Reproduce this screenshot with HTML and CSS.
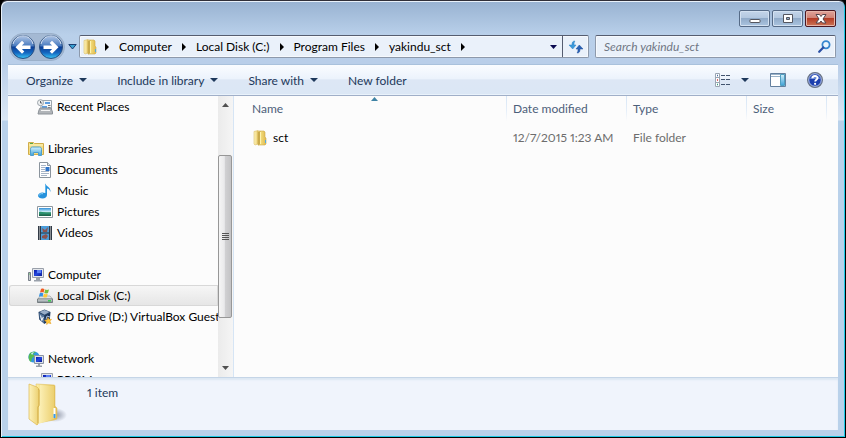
FILE: index.html
```html
<!DOCTYPE html>
<html lang="en">
<head>
<meta charset="utf-8">
<title>yakindu_sct</title>
<link rel="stylesheet" href="styles.css">
</head>
<body>
<svg class="defs" aria-hidden="true">
  <defs>
    <linearGradient id="gold" x1="0" x2="1"><stop offset="0" stop-color="#fff0a8"/><stop offset=".45" stop-color="#efd673"/><stop offset="1" stop-color="#e0b94f"/></linearGradient>
    <linearGradient id="goldLight" x1="0" x2="1"><stop offset="0" stop-color="#fdf3bd"/><stop offset="1" stop-color="#ecd070"/></linearGradient>
    <linearGradient id="orb" x1="0" y1="0" x2="0" y2="1"><stop offset="0" stop-color="#b4c8e6"/><stop offset=".45" stop-color="#4a7cc0"/><stop offset=".5" stop-color="#0b3f98"/><stop offset=".75" stop-color="#1467c0"/><stop offset="1" stop-color="#38c8f8"/></linearGradient>
    <linearGradient id="screen" x1="0" y1="0" x2="1" y2="1"><stop offset="0" stop-color="#0a1aa8"/><stop offset=".5" stop-color="#2448e0"/><stop offset="1" stop-color="#0a1890"/></linearGradient>
    <linearGradient id="sky" x1="0" y1="0" x2="0" y2="1"><stop offset="0" stop-color="#2f8fd8"/><stop offset=".5" stop-color="#d8f4fa"/><stop offset=".6" stop-color="#3b8f68"/><stop offset="1" stop-color="#15604a"/></linearGradient>
    <linearGradient id="aqua" x1="0" y1="0" x2="0" y2="1"><stop offset="0" stop-color="#d4f1fc"/><stop offset="1" stop-color="#3fa2d8"/></linearGradient>
    <linearGradient id="metal" x1="0" y1="0" x2="0" y2="1"><stop offset="0" stop-color="#e4e8ea"/><stop offset="1" stop-color="#7b868c"/></linearGradient>
    <symbol id="folder" viewBox="0 0 16 16">
      <path d="M2 1.500 6 .5V14l-3 1-1-1z" fill="url(#goldLight)" stroke="#dcc068" stroke-width=".6"/>
      <path d="M6 1h6l1 1v5l1 1v6l-1 1H6z" fill="url(#gold)" stroke="#cfa747" stroke-width=".6"/>
      <path d="M6 2 8.500 1v13L6 15.500z" fill="#c9aa4c"/>
      <path d="M8.500 2v12" stroke="#fff3b0"/>
      <path d="M13.500 10v3" stroke="#52abe0"/>
    </symbol>
    <symbol id="monitor" viewBox="0 0 16 16">
      <path d="M.5 5.500h2v8h-2z" fill="#c8ccd0" stroke="#777f88"/>
      <path d="M1 7h1" stroke="#5ec060"/>
      <path d="M4.500 1.500h11v9h-11z" fill="#e4e7ec" stroke="#9aa0aa"/>
      <path d="M6 3h8v6H6z" fill="url(#screen)"/>
      <path d="M9 3h4v3H9z" fill="#5c80f4"/>
      <path d="M8 11h4v2h2v1.500H6V13h2z" fill="#9aa1ab"/>
    </symbol>
  </defs>
</svg>
<div class="window">
  <header class="titlebar">
    <button class="caption" type="button" aria-label="Minimize"><svg width="12" height="12" viewBox="0 0 12 12"><rect x="1" y="6.500" width="10" height="3" rx=".5" fill="#fff" stroke="#54565f"/></svg></button>
    <button class="caption" type="button" aria-label="Maximize"><svg width="12" height="12" viewBox="0 0 12 12"><path d="M1.500 1.500h9v8h-9zM4.500 4.500v2h3v-2z" fill="#fff" fill-rule="evenodd" stroke="#54565f"/></svg></button>
    <button class="caption close" type="button" aria-label="Close"><svg width="12" height="12" viewBox="0 0 12 12"><path d="M1 1.500h3.500L6 3.500l1.500-2H11L8 6l3 4H7.500L6 8l-1.500 2H1l3-4z" fill="#fff" stroke="#54434a"/></svg></button>
  </header>

  <div class="navigation">
    <div class="travel">
      <button class="orb" type="button" aria-label="Back"><svg width="24" height="24" viewBox="0 0 24 24"><circle cx="12" cy="12" r="11.500" fill="url(#orb)" stroke="#2a4f80"/><path d="M2 9a10.200 10.200 0 0 1 20 0" fill="none" stroke="#d2def0"/><path d="M4.500 12.200 11 5.700l2.300 2.300-2.400 2.400H19.500v3.600h-8.600l2.400 2.400-2.300 2.300z" fill="#fff"/></svg></button>
      <button class="orb" type="button" aria-label="Forward"><svg width="24" height="24" viewBox="0 0 24 24"><circle cx="12" cy="12" r="11.500" fill="url(#orb)" stroke="#2a4f80"/><path d="M2 9a10.200 10.200 0 0 1 20 0" fill="none" stroke="#d2def0"/><path d="M19.500 12.200 13 5.700 10.700 8l2.400 2.400H4.500V14h8.600l-2.400 2.400 2.300 2.300z" fill="#fff"/></svg></button>
    </div>
    <button class="recent" type="button" aria-label="Recent pages"><svg width="9" height="6" viewBox="0 0 9 6"><path d="M.8.500h7.400L4.500 5z" fill="#38a0d0" stroke="#1d3f73"/></svg></button>
    <nav class="address" aria-label="Address">
      <svg class="folder-small" width="16" height="16"><use href="#folder"/></svg>
      <svg class="crumb-arrow" width="4" height="8"><path d="M0 0v8l4-4z"/></svg>
      <a href="#">Computer</a>
      <svg class="crumb-arrow" width="4" height="8"><path d="M0 0v8l4-4z"/></svg>
      <a href="#">Local Disk (C:)</a>
      <svg class="crumb-arrow" width="4" height="8"><path d="M0 0v8l4-4z"/></svg>
      <a href="#">Program Files</a>
      <svg class="crumb-arrow" width="4" height="8"><path d="M0 0v8l4-4z"/></svg>
      <a href="#">yakindu_sct</a>
      <svg class="crumb-arrow" width="4" height="8"><path d="M0 0v8l4-4z"/></svg>
      <button class="history" type="button" aria-label="Previous locations"><svg width="7" height="4"><path d="M0 0h7L3.500 4z" fill="#0a0a50"/></svg></button>
      <button class="refresh" type="button" aria-label="Refresh"><svg width="16" height="14" viewBox="0 0 16 14"><path d="M7 1C4.500 1 4 2.500 4 5H1l3.700 4L8 5H6c0-2 .2-3 1-4z" fill="#3a9adb" stroke="#2c7fc2" stroke-width=".5"/><path d="M9 13c2.500 0 3-1.500 3-4h3l-3.700-4L8 9h2c0 2-.2 3-1 4z" fill="#2a62b4" stroke="#1f4f9c" stroke-width=".5"/></svg></button>
    </nav>
    <label class="search">
      <input type="search" placeholder="Search yakindu_sct" aria-label="Search yakindu_sct">
      <svg width="13" height="13" viewBox="0 0 13 13"><circle cx="8" cy="4.800" r="3.600" fill="#eaf5fd" stroke="#3586cf" stroke-width="1.800"/><path d="M5.300 7.500 1.200 11.800" stroke="#2a4fa4" stroke-width="2.200" stroke-linecap="round"/></svg>
    </label>
  </div>

  <main class="client">
    <div class="toolbar">
      <button type="button">Organize<svg width="8" height="4"><path d="M0 0h8L4 4z"/></svg></button>
      <button type="button">Include in library<svg width="8" height="4"><path d="M0 0h8L4 4z"/></svg></button>
      <button type="button">Share with<svg width="8" height="4"><path d="M0 0h8L4 4z"/></svg></button>
      <button type="button">New folder</button>
      <div class="view-tools">
        <button class="views" type="button" aria-label="Change your view"><svg width="16" height="14" viewBox="0 0 16 14"><path d="M.5.500h4v13h-4zM.5 4.500h4M.5 9.500h4" fill="#fff" stroke="#9aa5b2"/><path d="M2 2.500h1" stroke="#426ca5" stroke-width="1.500"/><path d="M2 7h1" stroke="#d03030" stroke-width="1.500"/><path d="M2 11.500h1" stroke="#2f9a80" stroke-width="1.500"/><path d="M6 2.500h10M6 6.500h10M6 11.500h10" stroke="#41536e" stroke-dasharray="4 1"/></svg><svg width="8" height="4"><path d="M0 0h8L4 4z"/></svg></button>
        <button type="button" aria-label="Show the preview pane"><svg width="16" height="14" viewBox="0 0 16 14"><path d="M.5.500h15v13H.5z" fill="#fff" stroke="#64809f"/><path d="M1 1.500h14M1 3.500h9" stroke="#9ab3c9"/><path d="M10.500 1.500h4v11h-4z" fill="url(#aqua)" stroke="#4f9fc0"/></svg></button>
        <button type="button" aria-label="Get help"><svg width="16" height="16" viewBox="0 0 16 16"><circle cx="8" cy="8" r="7.400" fill="#1c3fae" stroke="#6b7585" stroke-width="1.200"/><circle cx="8" cy="8" r="6.300" fill="none" stroke="#dbe5f5" stroke-width=".8"/><path d="M3 7a5.200 5.200 0 0 1 10 0z" fill="#6585d4"/><path d="M5.500 6.300C5.500 3.200 10.500 3.300 10.500 6c0 1.800-2.300 1.800-2.300 3.500" fill="none" stroke="#fff" stroke-width="1.900"/><circle cx="8.100" cy="11.800" r="1.100" fill="#fff"/></svg></button>
      </div>
    </div>

    <div class="panes">
      <nav class="tree" aria-label="Folders">
        <ul>
          <li class="child last"><a href="#"><svg width="16" height="16" viewBox="0 0 16 16"><path d="M4 1.500h10.500v9H4z" fill="#f4f7f9" stroke="#9ba5ad"/><path d="M8 3h5v2H8zM5 7h5v3H5z" fill="#5b9ce0"/><path d="M11 6.500h2.500M11 8.500h2.500" stroke="#777"/><path d="m2 11 1-2h11l1.500 4v2H1z" fill="#b1b5b9" stroke="#8c9298"/><path d="M4 11.500h9" stroke="#f5f5f5"/><circle cx="3.500" cy="3.700" r="3" fill="#eef0f1" stroke="#9ca4aa"/><path d="M3.500 2v2h1.700" fill="none" stroke="#596069"/></svg>Recent Places</a></li>
          <li><a href="#"><svg width="16" height="16" viewBox="0 0 16 16"><path d="M.5 1.500h5l1 1h9v11H.5z" fill="#f4dd83" stroke="#d0ad4b"/><path d="M2 2.500h3" stroke="#58a845"/><path d="M1 4h14" stroke="#fff4bd"/><path d="M2.500 8.500c0-2 1-2.500 2-2.500h7c1 0 2 .5 2 2.500v6h-3v-3h-5v3h-3z" fill="url(#aqua)" stroke="#4d9dcc"/></svg>Libraries</a></li>
          <li class="child"><a href="#"><svg width="16" height="16" viewBox="0 0 16 16"><path d="M2.500.500h8l3 3v12h-11z" fill="#fff" stroke="#8b949d"/><path d="M10.500.500v3h3" fill="#dfe5ea" stroke="#8b949d"/><path d="M4 3.500h5M4 5.500h4M4 7.500h4M4 9.500h8M4 11.500h8M4 13.500h6" stroke="#a6b4c6"/><path d="M8.500 5h4v4h-4z" fill="#2e73c8"/></svg>Documents</a></li>
          <li class="child"><a href="#"><svg width="16" height="16" viewBox="0 0 16 16"><path d="M8 .300c.5 3 6 3.200 5.500 9-.5-2.600-2-3.500-3.500-3.800V12c0 2-2 3.500-4.500 3.500S1 14.200 1 12.700C1 11 3 9.500 5.500 9.500c1 0 1.800.2 2.500.6z" fill="#2692dc"/><path d="M2.200 12.500c.3-1.300 2-2.200 3.800-1.800" fill="none" stroke="#8ed5fb"/><path d="M8.500 2v8" stroke="#7bc8f3" stroke-width=".7"/></svg>Music</a></li>
          <li class="child"><a href="#"><svg width="16" height="16" viewBox="0 0 16 16"><path d="M.5 2.500h15v11H.5z" fill="#fff" stroke="#8e979e"/><path d="M2 4h12v8H2z" fill="url(#sky)"/><path d="M2 8c3-1 5 1 12 .5V10H2z" fill="#2a9170"/></svg>Pictures</a></li>
          <li class="child last"><a href="#"><svg width="16" height="16" viewBox="0 0 16 16"><path d="M1 1h14v14H1z" fill="#26303b"/><path d="M4 1h8v6.500H4zM4 8.500h8V15H4z" fill="#4b9dda"/><path d="m5 3 3 2 3-3-1 5H6zM5 11l4-2 2 2-2 3-4-1z" fill="#8c5350"/><path d="M2.500 1.500v13M13.500 1.500v13" stroke="#eee" stroke-width="1.200" stroke-dasharray="1 1"/></svg>Videos</a></li>
          <li><a href="#"><svg width="16" height="16"><use href="#monitor"/></svg>Computer</a></li>
          <li class="child"><a class="selected" href="#"><svg width="16" height="16" viewBox="0 0 16 16"><path d="m1 11 2-3h10l2.500 3z" fill="#e0e4e5" stroke="#959da1" stroke-width=".7"/><path d="M.5 11h15v3.500H.5z" fill="url(#metal)" stroke="#596166" stroke-width=".7"/><path d="M11 12.800h3" stroke="#37d04d" stroke-width="1.500"/><path d="M4 1c1.500-.7 2.500-.5 3.500.2L6.600 4.500C5.500 4 4.500 4 3 4.500z" fill="#f15d24"/><path d="M8.200 1.500c1.300.6 2.500.5 3.800 0L11 5c-1.300.5-2.500.5-3.700 0z" fill="#79be3b"/><path d="M2.800 5.200c1.500-.6 2.500-.4 3.600.2l-.9 3.300c-1.300-.6-2.300-.5-3.700 0z" fill="#3393e5"/><path d="M7 5.800c1.300.6 2.500.5 3.800 0l-1 3.500c-1.300.5-2.500.4-3.700-.2z" fill="#ffc938"/></svg>Local Disk (C:)</a></li>
          <li class="child last"><a href="#"><svg width="16" height="16" viewBox="0 0 16 16"><path d="m7.500.500 6 2.500-.7 7.500-5.300 4.500-5.300-4.500L1.500 3z" fill="#274468"/><path d="m7.500 1 5 2-5 2.700L2.500 3z" fill="#98adc8"/><path d="m2 4 5 2.500v7.700L3 10z" fill="#58779f"/><path d="m8 6.500 5-2.500-.6 6L8 14.200z" fill="#1d3459"/><path d="m3.500 6.500 1.300 5 1.500-3.500" fill="none" stroke="#fff"/><path d="M9 10.500 10 7l3 1" fill="none" stroke="#a5badb"/><path d="m11 8.500 1 2 2.500-.2-1.500 2 1 2.400-2.400-.7-2 1.500v-2.500l-2-1.500 2.500-.7z" fill="#ffc83d" stroke="#e59e25" stroke-width=".5"/></svg>CD Drive (D:) VirtualBox Guest</a></li>
          <li><a href="#"><svg width="16" height="16" viewBox="0 0 16 16"><circle cx="6" cy="6" r="5.600" fill="#3197df"/><path d="M1 4c1-3 4-4 7-3L5 3l2 2-3 2-1 4C1 10 0 7 1 4z" fill="#57bb4e"/><path d="m3 2 3-1-2 3z" fill="#ccefff"/><path d="M6.500 4.500h9v8h-9z" fill="#dce1e8" stroke="#8c95a3"/><path d="M8 6h6v5H8z" fill="url(#screen)"/><path d="M10 13h2v1.500h2V16H8v-1.500h2z" fill="#97a0aa"/></svg>Network</a></li>
          <li class="child"><a href="#"><svg width="16" height="16"><use href="#monitor"/></svg>PRISM</a></li>
        </ul>
      </nav>
      <div class="scrollbar" aria-hidden="true">
        <svg width="7" height="4"><path d="M0 4h7L3.500 0z"/></svg>
        <div class="track"><div class="thumb"><i></i><i></i><i></i><i></i></div></div>
        <svg width="7" height="4"><path d="M0 0h7L3.500 4z"/></svg>
      </div>
      <section class="files" aria-label="Files">
        <table>
          <thead><tr><th class="name">Name<svg class="sorted" width="7" height="4"><path d="M0 4h7L3.500 0z" fill="#3f83a5"/></svg></th><th class="date">Date modified</th><th class="type">Type</th><th class="size">Size</th><td></td></tr></thead>
          <tbody><tr><td><a href="#"><svg width="16" height="16"><use href="#folder"/></svg>sct</a></td><td>12/7/2015 1:23 AM</td><td>File folder</td><td></td><td></td></tr></tbody>
        </table>
      </section>
    </div>

    <footer class="details">
      <svg width="40" height="44" viewBox="0 0 40 44">
        <defs><radialGradient id="shade"><stop offset="0" stop-color="#8c93a4"/><stop offset="1" stop-color="#8c93a4" stop-opacity="0"/></radialGradient></defs>
        <ellipse cx="27" cy="33" rx="12" ry="7" fill="url(#shade)"/>
        <path d="M8 2 26 3q1 0 1 1v20l2 2v11l-3 1-16 3z" fill="url(#gold)" stroke="#e0c267" stroke-width=".6"/>
        <path d="M12 3 26 4v33l-16 5z" fill="url(#goldLight)"/>
        <path d="M1 2 9 5l2 2v16l-1 1v18l-1 1-8-6z" fill="url(#goldLight)" stroke="#deb84d" stroke-width=".7"/>
        <path d="m10 7 1 1v16l-1 1v16" fill="none" stroke="#d6b350"/>
        <path d="M26.500 26v10" stroke="#fff" stroke-width="2"/><path d="M26.500 32v4" stroke="#399be8" stroke-width="2"/>
      </svg>
      <span>1 item</span>
    </footer>
  </main>
</div>
</body>
</html>
```

FILE: styles.css
```css
* { box-sizing: border-box; }
body {
  margin: 0;
  background: #000;
  color: #000;
  font: 12px/21px Lato, "Open Sans", sans-serif;
  font-variant-numeric: proportional-nums;
}
svg { display: block; flex: none; }
a { color: inherit; text-decoration: none; }
button {
  display: flex;
  align-items: center;
  justify-content: center;
  padding: 0;
  border: 0;
  background: none;
  color: inherit;
  font: inherit;
}
.defs { position: absolute; width: 0; height: 0; }

.window {
  display: flex;
  flex-direction: column;
  height: 100vh;
  padding: 1px 7px 7px;
  border: 1px solid #000;
  border-top-color: #302f38;
  border-radius: 7px 7px 0 0;
  background: linear-gradient(#98b2d1, #b9d0ea 34px, #b9cee9 62px, #dbe7f4 119px, #b9d1ea 120px);
  box-shadow: inset 1px 1px #e9f1fa, inset -1px -1px #1dc9e5;
}

.titlebar {
  display: flex;
  flex: none;
  justify-content: flex-end;
  gap: 2px;
  height: 33px;
  padding: 8px 2px 0 0;
}
.caption {
  width: 31px;
  height: 17px;
  border: 1px solid #566b87;
  border-radius: 2px;
  background: linear-gradient(#c4d5e9, #b3c8e0 45%, #91abc9 50%, #aac4e0);
  box-shadow: inset 0 0 0 1px #d3e1f1;
}
.close {
  border-color: #4b1721;
  background: linear-gradient(#e0a39a, #d08376 45%, #b43c26 50%, #cc7556);
  box-shadow: inset 0 0 0 1px #e5b5a9;
}

.navigation {
  display: flex;
  flex: none;
  align-items: center;
  height: 29px;
  padding: 0 2px 6px 1px;
}
.travel {
  display: flex;
  gap: 4px;
  margin: -2px 0;
  padding: 1px;
  border: 1px solid #9bb0ca;
  border-radius: 14px;
  background: #a4b9d3;
}
.recent { width: 14px; height: 22px; }
.address, .search {
  display: flex;
  align-items: center;
  height: 23px;
  border: 1px solid #8d99ab;
  border-top-color: #555d70;
  border-radius: 2px;
  background: #eaf1fa;
  box-shadow: inset 0 0 0 1px #f6f9fd;
}
.address { flex: 1; gap: 10px; min-width: 0; padding-left: 2px; white-space: nowrap; }
.folder-small { margin-right: -3px; }
.history { width: 18px; height: 21px; margin-left: auto; margin-right: -10px; }
.refresh { width: 26px; height: 21px; border-left: 1px solid #555d70; }
.search { width: 241px; margin-left: 6px; padding: 0 4px 0 8px; }
.search input {
  flex: 1;
  min-width: 0;
  padding: 0;
  border: 0;
  outline: 0;
  background: none;
  font: inherit;
}
.search input::placeholder { color: #707784; font-style: italic; opacity: 1; }

.client {
  display: flex;
  flex: 1;
  flex-direction: column;
  min-height: 0;
  background: #fcfcfc;
}
.toolbar {
  display: flex;
  flex: none;
  align-items: center;
  gap: 30px;
  height: 32px;
  padding: 0 15px 0 18px;
  border-top: 1px solid #a9c1dc;
  border-bottom: 1px solid #a0afc8;
  background: linear-gradient(#fafcff, #ecf3fc 45%, #dde7f5 50%, #dbe7f5);
  box-shadow: inset 0 -1px #e9f2fb;
  color: #1e395b;
  white-space: nowrap;
}
.toolbar button { gap: 6px; }
.toolbar button svg:not([viewBox]) { fill: #1e395b; }
.view-tools { display: flex; align-items: center; gap: 21px; margin-left: auto; }
.toolbar .views { gap: 10px; }

.panes { display: flex; flex: 1; min-height: 0; }
.tree { width: 210px; overflow: hidden; }
.tree ul { margin: 0; padding: 0; list-style: none; }
.tree a {
  display: flex;
  align-items: center;
  gap: 4px;
  height: 21px;
  margin-left: 1px;
  padding-left: 19px;
  white-space: nowrap;
}
.tree .child a { padding-left: 28px; }
.tree .last { margin-bottom: 21px; }
.tree .selected {
  border-radius: 3px 0 0 3px;
  background: linear-gradient(#f7f7f7, #e5e5e5);
  box-shadow: inset 0 0 0 1px #d8d8d8;
}
.scrollbar {
  display: flex;
  flex: none;
  flex-direction: column;
  align-items: center;
  width: 15px;
  padding: 7px 1px 7px 0;
  background: linear-gradient(90deg, #ebebeb, #f5f5f5);
  fill: #505050;
}
.track {
  display: flex;
  flex: 1;
  align-items: center;
  align-self: stretch;
  margin: 6px 0;
}
.thumb {
  display: flex;
  flex: 1;
  flex-direction: column;
  align-items: center;
  justify-content: center;
  gap: 1px;
  height: 66%;
  border: 1px solid #979797;
  border-radius: 2px;
  background: linear-gradient(90deg, #f5f5f5, #e9e9eb 45%, #d1d1d3 50%, #c3c3c5);
}
.thumb i { width: 7px; height: 1px; background: #555; }

.files { flex: 1; min-width: 0; border-left: 1px solid #d6e5f5; }
table { width: 100%; border-collapse: collapse; table-layout: fixed; }
th, td { padding: 0 0 0 6px; text-align: left; white-space: nowrap; }
th {
  position: relative;
  height: 25px;
  background: linear-gradient(#d6e5f5, #e6eff9 60%, #fcfcfc) right / 1px 100% no-repeat;
  color: #4c607a;
  font-weight: 400;
}
th:first-child, td:first-child { padding-left: 18px; }
.name { width: 273px; }
.date, .type { width: 120px; }
.size { width: 80px; }
.sorted { position: absolute; top: 1px; left: 50%; }
tbody td { height: 33px; color: #6d6d6d; }
tbody a { display: flex; align-items: center; gap: 5px; color: #000; }

.details {
  display: flex;
  flex: none;
  gap: 19px;
  height: 53px;
  padding: 4px 20px;
  border-top: 1px solid #c5d5e7;
  background: #f0f4fc;
  box-shadow: inset 0 2px 2px #dce7f3;
  color: #1e395b;
}
```
